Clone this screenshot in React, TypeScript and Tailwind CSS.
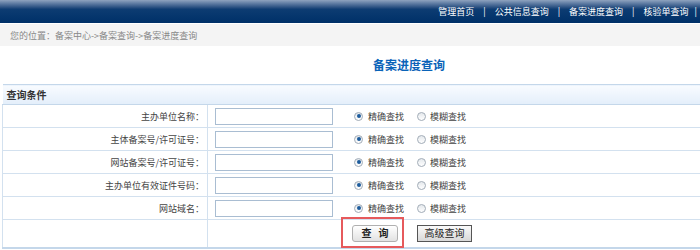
import React from 'react';

const rows = ['主办单位名称：', '主体备案号/许可证号：', '网站备案号/许可证号：', '主办单位有效证件号码：', '网站域名：'];

function Radio({ checked }: { checked?: boolean }) {
  return (
    <span className="inline-flex w-[9px] h-[9px] rounded-full border border-[#a3adb8] bg-gradient-to-b from-[#e4e8ec] to-white items-center justify-center">
      {checked && <span className="w-[4px] h-[4px] rounded-full bg-[#1d5c9c]" />}
    </span>
  );
}

export default function App() {
  return (
    <div className="w-[700px] h-[250px] bg-white overflow-hidden text-[9px] leading-none font-['Noto_Sans_CJK_SC','Liberation_Sans',sans-serif]">
      {/* top bar */}
      <div className="h-[23px] bg-gradient-to-b from-[#8fa3bf] via-[#0d3c72] via-40% to-[#003068] flex items-center justify-end pr-[3px] text-white">
        <span>管理首页</span>
        <span className="mx-[9px]">|</span>
        <span>公共信息查询</span>
        <span className="mx-[9px]">|</span>
        <span>备案进度查询</span>
        <span className="mx-[9px]">|</span>
        <span>核验单查询</span>
        <span className="ml-[6px]">|</span>
      </div>
      <div className="h-[22px] mt-px bg-[#f4f4f4] flex items-center pl-[10px] text-[#888]">
        您的位置：备案中心-&gt;备案查询-&gt;备案进度查询
      </div>

      <div className="h-[38px] flex items-center pl-[373px] text-[#0a63b8] font-bold text-[12px]">
        备案进度查询
      </div>

      <table className="ml-[2px] w-[740px] border-collapse table-fixed">
        <colgroup>
          <col className="w-[205px]" />
          <col />
        </colgroup>
        <tbody>
          <tr className="h-[20px]">
            <td colSpan={2} className="border-y border-[#c4d7ea] bg-gradient-to-b from-[#f8fbff] to-[#e3eefa] pl-[4px] font-bold text-[10px] text-[#333]">
              查询条件
            </td>
          </tr>
          {rows.map((r, i) => (
            <tr key={i} className="h-[23px]">
              <td className="border border-[#d3e1ef] text-right pr-[3px] text-[#444]">{r}</td>
              <td className="border border-[#d3e1ef] pl-[7px]">
                <div className="flex items-center">
                  <input className="w-[118px] h-[17px] border border-[#a9bdd2] bg-white outline-none" />
                  <span className="ml-[21px] mr-[5px] flex"><Radio checked /></span>
                  <span className="text-[#444]">精确查找</span>
                  <span className="ml-[13px] mr-[4px] flex"><Radio /></span>
                  <span className="text-[#444]">模糊查找</span>
                </div>
              </td>
            </tr>
          ))}
          <tr className="h-[28px]">
            <td className="border border-[#d3e1ef] border-b-2 border-b-[#c4d7ea]" />
            <td className="border border-[#d3e1ef] border-b-2 border-b-[#c4d7ea] pl-[7px]">
              <div className="flex items-center">
                <div className="relative ml-[137px]">
                  <button className="w-[46px] h-[17px] rounded-[3px] border border-[#b0b0b0] bg-gradient-to-b from-white to-[#e2e2e2] font-bold text-[10px] text-[#222] whitespace-nowrap">
                    查&nbsp;&nbsp;&nbsp;询
                  </button>
                  {/* red highlight frame */}
                  <div className="absolute left-[-11px] top-[-8px] w-[63px] h-[31px] border-2 border-solid border-[#e65a5c] pointer-events-none" />
                </div>
                <button className="ml-[19px] w-[55px] h-[17px] border border-[#555] bg-gradient-to-b from-[#fafafa] to-[#d8d8d8] text-[10px] text-[#222] whitespace-nowrap">
                  高级查询
                </button>
              </div>
            </td>
          </tr>
        </tbody>
      </table>
    </div>
  );
}
